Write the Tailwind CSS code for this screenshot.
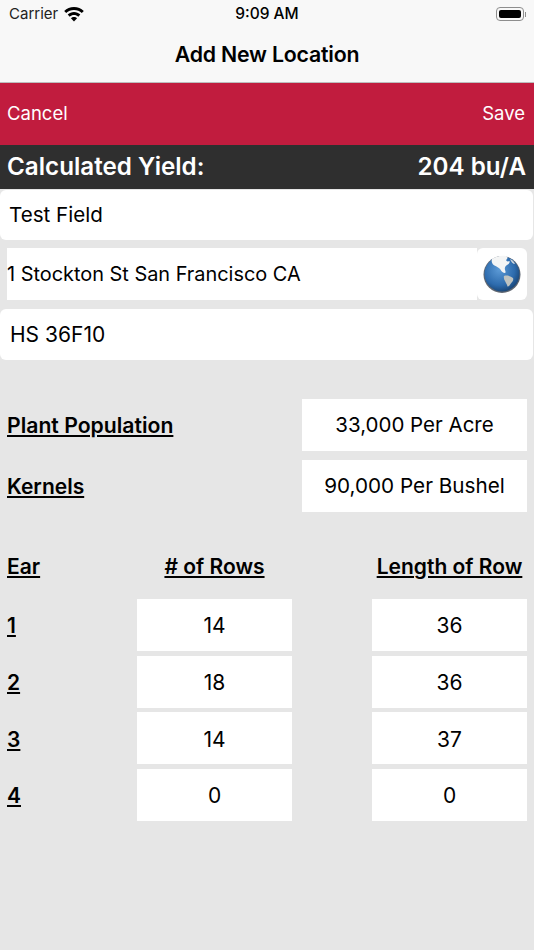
<!DOCTYPE html>
<html lang="en">
<head>
  <meta charset="UTF-8">
  <title>Add New Location</title>
  <script src="https://cdn.jsdelivr.net/npm/@tailwindcss/browser@4"></script>
</head>
<body class="bg-[#e6e6e6] text-black font-['Inter','Liberation_Sans',sans-serif]">
  <div class="w-[534px] h-[950px] overflow-hidden">

    <!-- Status + nav bar -->
    <div class="h-[83px] bg-[#f8f8f8] border-b border-[#bdbdbd]">
      <div class="h-[28px] relative flex items-center justify-between pl-[9px] pr-[8px] text-[15px]">
        <div class="flex items-center gap-[6px] text-[#222]">
          <span>Carrier</span>
          <svg width="20" height="15" viewBox="0 0 20 15" fill="#000">
            <path d="M10 0c3.800 0 7.200 1.500 9.800 3.900l-2 2.200C15.800 4.200 13 3.100 10 3.100S4.200 4.200 2.200 6.100l-2-2.200C2.800 1.500 6.200 0 10 0z"/>
            <path d="M10 5c2.400 0 4.600.9 6.300 2.500l-2 2.200C13.100 8.600 11.600 8 10 8s-3.100.6-4.300 1.700l-2-2.200C5.400 5.900 7.600 5 10 5z"/>
            <path d="M10 10c1.200 0 2.300.5 3.100 1.200L10 14.600l-3.100-3.400C7.700 10.500 8.800 10 10 10z"/>
          </svg>
        </div>
        <span class="absolute left-0 right-0 text-center font-medium text-[15.500px]">9:09 AM</span>
        <div class="flex items-center">
          <div class="w-[28px] h-[14px] rounded-[4px] border border-[#8e8e8e] p-[2px]">
            <div class="w-full h-full rounded-[2px] bg-black"></div>
          </div>
          <div class="w-[1px] h-[5px] bg-[#8e8e8e] ml-[1px]"></div>
        </div>
      </div>
      <div class="h-[54px] flex items-center justify-center text-[21.300px] font-semibold tracking-[-0.2px]">Add New Location</div>
    </div>

    <!-- Action bar -->
    <div class="h-[62px] bg-[#c11c3e] flex items-center justify-between pl-[7px] pr-[9px] text-white text-[18.500px]">
      <span>Cancel</span>
      <span>Save</span>
    </div>

    <!-- Yield -->
    <div class="h-[44px] bg-[#2f2f2f] flex items-center justify-between pl-[7px] pr-[8px] text-white text-[24.200px] font-semibold">
      <span>Calculated Yield:</span>
      <span>204 bu/A</span>
    </div>

    <!-- Location fields -->
    <div class="mt-[1px] h-[50px] w-[533px] bg-white rounded-[6px] flex items-center pl-[9px] text-[20.600px]">Test Field</div>
    <div class="mt-[8px] ml-[7px] w-[520px] h-[52px] flex">
      <div class="w-[470px] bg-white flex items-center text-[19.900px] pt-[1px]">1 Stockton St San Francisco CA</div>
      <div class="w-[50px] bg-white rounded-[6px] flex items-center justify-center">
        <svg width="38" height="38" viewBox="0 0 38 38">
          <defs>
            <radialGradient id="sea" cx="0.42" cy="0.38" r="0.68">
              <stop offset="0" stop-color="#5c9ad6"/>
              <stop offset="0.65" stop-color="#2d6bad"/>
              <stop offset="1" stop-color="#163f6d"/>
            </radialGradient>
            <filter id="soft"><feGaussianBlur stdDeviation="0.6"/></filter>
          </defs>
          <circle cx="19" cy="19.500" r="18.500" fill="#5f6670" filter="url(#soft)"/>
          <circle cx="19" cy="19" r="17.500" fill="url(#sea)"/>
          <g filter="url(#soft)">
            <path d="M9 4c3-2 8-4 14-3 2 .5 2 2.500.5 3.500-1 1.500 1 2.500 3 1.500.5 1.500-.5 3-2.500 4-2 1-2.500 3-2 5 .5 1.500 1 2.500 0 3-2 0-3.500-1.500-4.500-3.500-1.500-2-4-3-6-4C9.500 9.500 8 6.500 9 4z" fill="#f4f5f5"/>
            <path d="M21 21c3-1 6 0 9 2 1 2.500-1 4-2.500 6-1 1.500-2 3-3 2.500-.5-2-1.500-3.500-2.500-5.500-1-1.500-1.500-3.500-1-5z" fill="#bfc3c0"/>
            <path d="M27 4c2 .5 4 2.500 5 5-2 0-4-2-5-5z" fill="#c9d3dc"/>
          </g>
        </svg>
      </div>
    </div>
    <div class="mt-[9px] h-[51px] w-[533px] bg-white rounded-[6px] flex items-center pl-[10px] text-[21px]">HS 36F10</div>

    <!-- Population -->
    <div class="mt-[39px] ml-[7px] w-[520px] flex items-center justify-between h-[52px]">
      <span class="pt-[2px] text-[21.200px] font-semibold underline decoration-[2px] underline-offset-[2px]">Plant Population</span>
      <div class="w-[225px] h-full bg-white flex items-center justify-center text-[20.500px] pt-[1px]">33,000 Per Acre</div>
    </div>
    <div class="mt-[9px] ml-[7px] w-[520px] flex items-center justify-between h-[52px]">
      <span class="pt-[2px] text-[21px] font-semibold underline decoration-[2px] underline-offset-[2px]">Kernels</span>
      <div class="w-[225px] h-full bg-white flex items-center justify-center text-[20.700px]">90,000 Per Bushel</div>
    </div>

    <!-- Ear table -->
    <div class="mt-[28px] ml-[7px] w-[520px] grid grid-cols-[130px_155px_80px_155px] h-[52px] items-center text-[21px] font-semibold">
      <span class="pt-[2px] underline decoration-[2px] underline-offset-[2px]">Ear</span>
      <span class="pt-[2px] underline decoration-[2px] underline-offset-[2px] text-center">#&nbsp;of Rows</span>
      <span></span>
      <span class="pt-[2px] underline decoration-[2px] underline-offset-[2px] text-center whitespace-nowrap">Length of Row</span>
    </div>
    <div class="mt-[7px] ml-[7px] w-[520px] grid grid-cols-[130px_155px_80px_155px] auto-rows-[52px] gap-y-[4.670px] items-center text-[21px]">
      <span class="pt-[2px] font-semibold underline decoration-[2px] underline-offset-[2px]">1</span>
      <div class="h-full pt-[2px] bg-white flex items-center justify-center">14</div>
      <span></span>
      <div class="h-full pt-[2px] bg-white flex items-center justify-center">36</div>

      <span class="pt-[2px] font-semibold underline decoration-[2px] underline-offset-[2px]">2</span>
      <div class="h-full pt-[2px] bg-white flex items-center justify-center">18</div>
      <span></span>
      <div class="h-full pt-[2px] bg-white flex items-center justify-center">36</div>

      <span class="pt-[2px] font-semibold underline decoration-[2px] underline-offset-[2px]">3</span>
      <div class="h-full pt-[2px] bg-white flex items-center justify-center">14</div>
      <span></span>
      <div class="h-full pt-[2px] bg-white flex items-center justify-center">37</div>

      <span class="pt-[2px] font-semibold underline decoration-[2px] underline-offset-[2px]">4</span>
      <div class="h-full pt-[2px] bg-white flex items-center justify-center">0</div>
      <span></span>
      <div class="h-full pt-[2px] bg-white flex items-center justify-center">0</div>
    </div>
  </div>
</body>
</html>
